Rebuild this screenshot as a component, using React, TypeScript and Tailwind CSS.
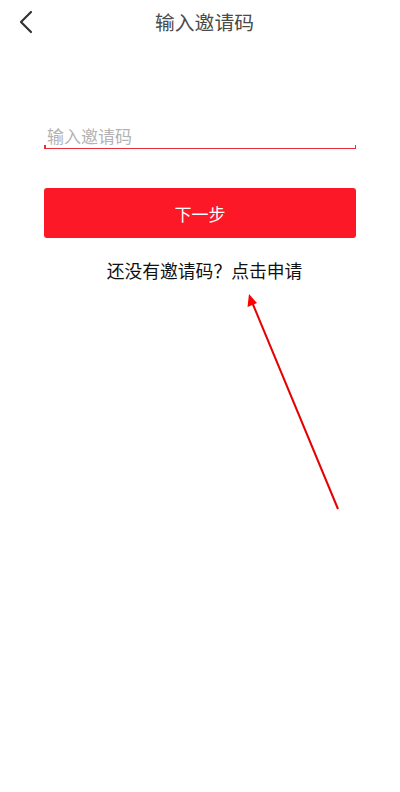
export default function App() {
  return (
    <div
      className="relative w-[400px] h-[792px] bg-white overflow-hidden"
      style={{ fontFamily: '"Noto Sans CJK SC", "Noto Sans", sans-serif' }}
    >
      {/* header */}
      <div className="relative flex items-center justify-center h-[44px]">
        <button className="absolute left-[14px] top-[8px] w-[24px] h-[28px] flex items-center justify-center">
          <svg width="16" height="24" viewBox="0 0 16 24" fill="none">
            <path d="M13 2 L3 12 L13 22" stroke="#333" strokeWidth="2.2" strokeLinecap="round" strokeLinejoin="round" />
          </svg>
        </button>
        <h1 className="text-[19.8px] leading-none text-[#4a4a4a] ml-[9px]">输入邀请码</h1>
      </div>

      {/* form */}
      <div className="px-[44px] pt-[78px]">
        <div className="relative h-[27px]">
          <input
            placeholder="输入邀请码"
            className="w-full h-full pl-[3px] text-[17px] leading-none outline-none placeholder:text-[#b3b3b3] bg-transparent"
          />
          <div className="absolute left-0 right-0 bottom-0 h-[1.5px] bg-[#e2313d]" />
          <div className="absolute left-0 bottom-0 w-[1.5px] h-[4px] bg-[#e2313d]" />
          <div className="absolute right-0 bottom-0 w-[1.5px] h-[4px] bg-[#e2313d]" />
        </div>

        <button className="mt-[39px] w-full h-[50px] rounded-[3px] bg-[#fc1826] text-white text-[17px] leading-none flex items-center justify-center">
          下一步
        </button>

        <p className="mt-[24px] pl-[9px] text-center text-[17.8px] leading-none text-[#111]">还没有邀请码？点击申请</p>
      </div>

      {/* annotation arrow */}
      <svg className="absolute left-0 top-0 pointer-events-none" width="400" height="792">
        <line x1="338" y1="509" x2="252" y2="302" stroke="#e60000" strokeWidth="2" />
        <polygon points="249,294 247.5,307 257,303" fill="#f00" />
      </svg>
    </div>
  );
}
